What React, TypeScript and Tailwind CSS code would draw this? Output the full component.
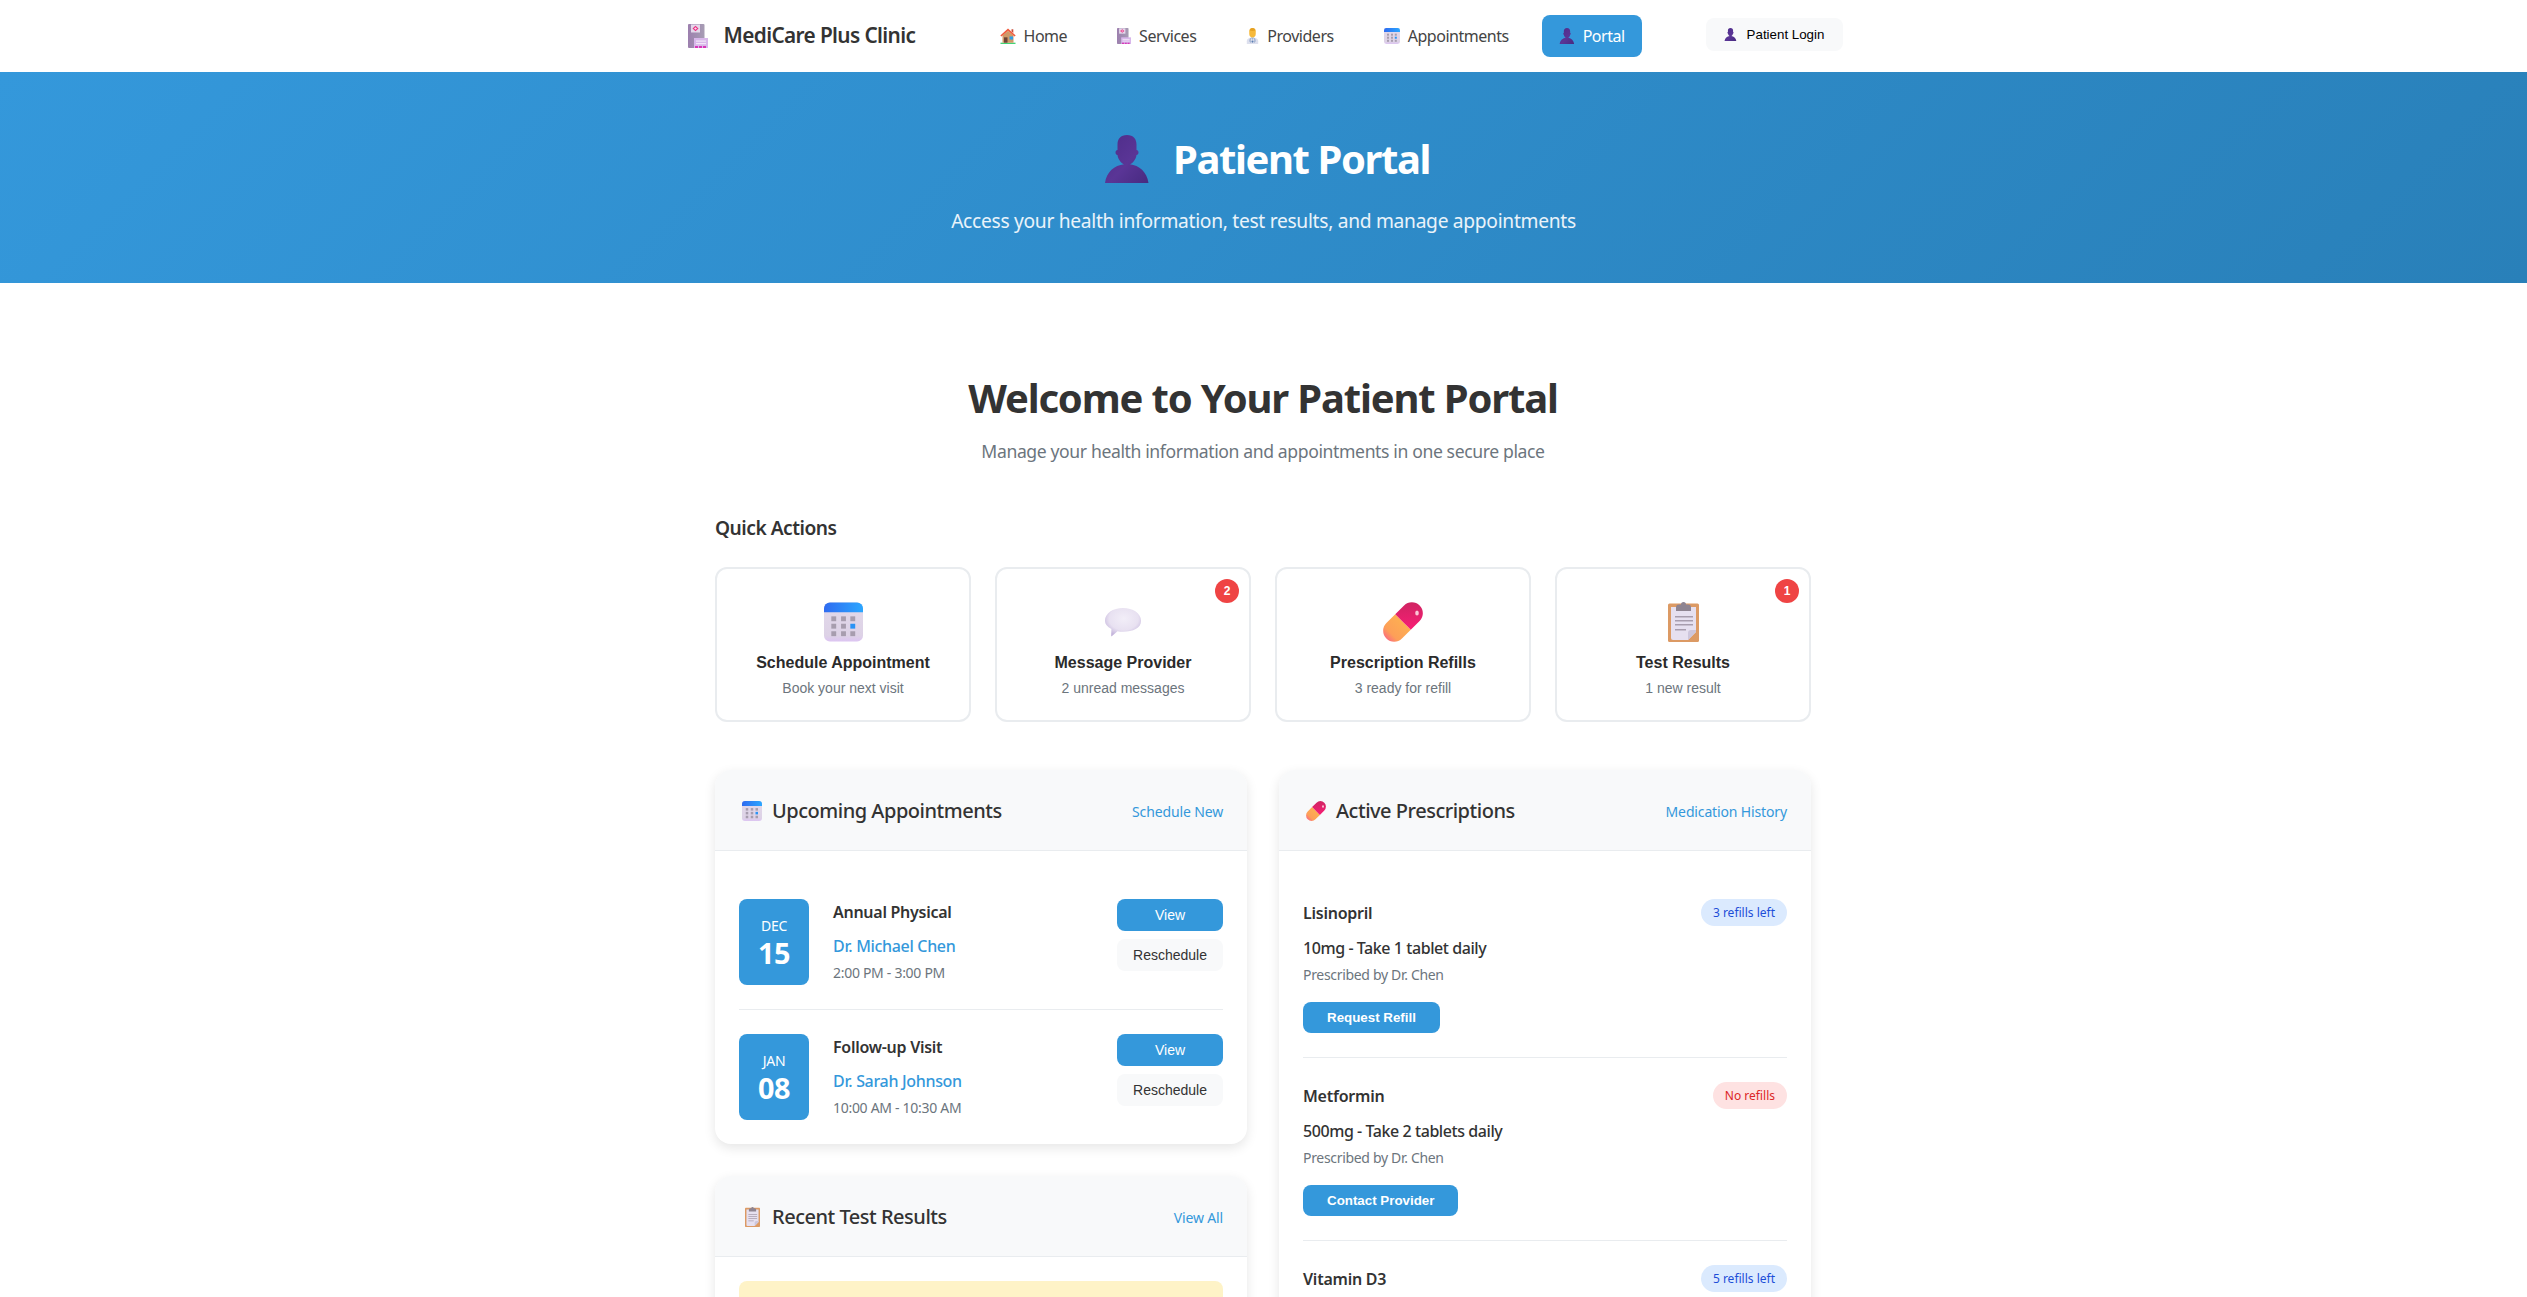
const CalendarIcon = ({ className = 'w-5 h-5' }: { className?: string }) => (
  <svg viewBox="0 0 40 40" className={className}>
    <defs>
      <linearGradient id="calTop" x1="0" y1="0" x2="1" y2="0">
        <stop offset="0" stopColor="#2f6bf0" />
        <stop offset="1" stopColor="#2ba6ff" />
      </linearGradient>
      <linearGradient id="calBody" x1="0" y1="0" x2="0" y2="1">
        <stop offset="0" stopColor="#e2d9ea" />
        <stop offset="0.85" stopColor="#ddd2e6" />
        <stop offset="1" stopColor="#dcc4f2" />
      </linearGradient>
    </defs>
    <rect x="0" y="0" width="40" height="40" rx="6" fill="url(#calBody)" />
    <path d="M0 10V6a6 6 0 0 1 6-6h28a6 6 0 0 1 6 6v4z" fill="url(#calTop)" />
    {[16.7, 24.3, 32].map((y) =>
      [10, 20, 29.5].map((x) => (
        <rect key={`${x}-${y}`} x={x - 2.5} y={y - 2.5} width="5" height="5" fill={x === 29.5 && y === 24.3 ? '#2b93f5' : '#a79dae'} />
      ))
    )}
  </svg>
);

const PillIcon = ({ className = 'w-5 h-5' }: { className?: string }) => (
  <svg viewBox="0 0 40 40" className={className}>
    <defs>
      <linearGradient id="pillA" x1="0" y1="1" x2="1" y2="0">
        <stop offset="0" stopColor="#f81d75" />
        <stop offset="1" stopColor="#c9265f" />
      </linearGradient>
      <linearGradient id="pillB" x1="1" y1="0" x2="0" y2="0">
        <stop offset="0" stopColor="#fdae52" />
        <stop offset="0.7" stopColor="#fd9f58" />
        <stop offset="1" stopColor="#fb6f7c" />
      </linearGradient>
    </defs>
    <g transform="translate(20 20) rotate(-45)">
      <path d="M0 -11H-12.500a11 11 0 0 0 0 22H0z" fill="url(#pillB)" />
      <path d="M0 -11H12.500a11 11 0 0 1 0 22H0z" fill="url(#pillA)" />
    </g>
    <ellipse cx="34" cy="11" rx="1.800" ry="2.600" fill="#fbc6d6" />
  </svg>
);

const ClipboardIcon = ({ className = 'w-5 h-5' }: { className?: string }) => (
  <svg viewBox="0 0 31 40" preserveAspectRatio="none" className={className}>
    <rect x="0" y="1.500" width="31" height="38.500" rx="1.500" fill="#dc9a64" />
    <path d="M3 5h25v25l-8 8H5a2 2 0 0 1-2-2z" fill="#e6e0f0" />
    <path d="M28 28v2l-8 8v-7a3 3 0 0 1 3-3z" fill="#cdc6dc" />
    <path d="M13 2.500a2.500 2.500 0 0 1 5 0h2a3 3 0 0 1 3 3V9H8V5.500a3 3 0 0 1 3-3z" fill="#8e8491" />
    <rect x="7" y="14" width="18" height="1.500" fill="#a79dae" />
    <rect x="7" y="18" width="18" height="1.500" fill="#a79dae" />
    <rect x="7" y="22" width="18" height="1.500" fill="#a79dae" />
    <rect x="7" y="27" width="11" height="1.500" fill="#a79dae" />
  </svg>
);

const BubbleIcon = ({ className = 'w-5 h-5' }: { className?: string }) => (
  <svg viewBox="0 0 40 34" preserveAspectRatio="none" className={className}>
    <defs>
      <radialGradient id="bubble" cx="0.52" cy="0.38" r="0.62">
        <stop offset="0" stopColor="#f2eef8" />
        <stop offset="0.65" stopColor="#e8e1f1" />
        <stop offset="1" stopColor="#c4b5dc" />
      </radialGradient>
    </defs>
    <path d="M20 1c10.500 0 19 6 19 14.500S30.500 28 20 28c-2 0-4-.2-5.800-.6L8.500 33c-.5.500-1 .2-1-.5l.3-7.500C3.500 22.500 1 19.200 1 15.500 1 7 9.500 1 20 1z" fill="url(#bubble)" />
  </svg>
);

const PersonIcon = ({ className = 'w-4 h-4' }: { className?: string }) => (
  <svg viewBox="0 0 44 48" className={className}>
    <defs>
      <linearGradient id="person" x1="0" y1="0" x2="1" y2="1">
        <stop offset="0" stopColor="#4d2c88" />
        <stop offset="0.55" stopColor="#5a3596" />
        <stop offset="1" stopColor="#472a80" />
      </linearGradient>
    </defs>
    <path d="M22 0c6.500 0 9.500 4 9.500 9.500V15c1.200.2 2 1.200 2 2.500s-.8 2.300-2 2.500c-.6 4.600-3.500 8-6.500 9.200 9 1 17 7.500 18.500 18.800H0C1.500 36.700 9.500 30.200 19 29.200 16 28 13.100 24.600 12.500 20c-1.200-.2-2-1.200-2-2.500s.8-2.300 2-2.500V9.500C12.500 4 15.500 0 22 0z" fill="url(#person)" />
  </svg>
);

const HospitalIcon = ({ className = 'w-5 h-5' }: { className?: string }) => (
  <svg viewBox="0 0 20 24" preserveAspectRatio="none" className={className}>
    <defs>
      <linearGradient id="hosp" x1="0" y1="0" x2="1" y2="0">
        <stop offset="0" stopColor="#9c7fae" />
        <stop offset="1" stopColor="#a79db4" />
      </linearGradient>
    </defs>
    <rect x="0" y="0" width="16.500" height="24" rx="1" fill="url(#hosp)" />
    <rect x="3" y="0.500" width="9" height="8" fill="#e4d8ea" />
    <path d="M7.500 1.800 10.500 4.500 7.500 7.200 4.500 4.500z" fill="#ea2e83" />
    <path d="M7.500 3.300 9 4.500 7.500 5.700 6 4.500z" fill="#f7dcec" />
    <rect x="6" y="14" width="14" height="10" fill="#d8b7ea" />
    <rect x="8" y="16.500" width="10" height="1.200" fill="#f2e7f7" />
    <rect x="8" y="19" width="10" height="1.200" fill="#f2e7f7" />
    <rect x="7" y="22" width="3" height="2" fill="#d737b8" />
    <rect x="11" y="22" width="3" height="2" fill="#d737b8" />
    <rect x="15" y="22" width="3" height="2" fill="#d737b8" />
  </svg>
);

const HouseIcon = ({ className = 'w-4 h-4' }: { className?: string }) => (
  <svg viewBox="0 0 16 18" preserveAspectRatio="none" className={className}>
    <rect x="0.500" y="16.500" width="15" height="1.500" fill="#43d477" />
    <path d="M2.500 8.500 8 3l5.500 5.500v8h-11z" fill="#cf9a69" />
    <rect x="4" y="10.500" width="3.500" height="6" fill="#6d4337" />
    <rect x="9.500" y="9.500" width="3.500" height="3.500" fill="#2f9fe6" />
    <path d="M11.500 1.500h1.800v4l-1.800-1.500z" fill="#c94e3a" />
    <path d="M8 .5.300 8.300l1.200 1.200L8 3l6.500 6.500 1.200-1.200z" fill="#f05a3c" />
  </svg>
);

const DoctorIcon = ({ className = 'w-4 h-4' }: { className?: string }) => (
  <svg viewBox="0 0 16 20" preserveAspectRatio="none" className={className}>
    <path d="M1 20v-3.500C1 13.500 4 12 8 12s7 1.500 7 4.500V20z" fill="#dde0ee" />
    <path d="M6 12h4l-2 3z" fill="#9ab3d8" />
    <path d="M5.500 13c-.7 2-.7 3.500 0 5M10.500 13c.7 2 .7 3.500 0 5" stroke="#5b7db0" strokeWidth="0.900" fill="none" />
    <circle cx="8" cy="17" r="1.300" fill="#5b7db0" />
    <path d="M8 0c2.700 0 4 1.700 4 4v3.500C12 10 10.300 12 8 12S4 10 4 7.500V4c0-2.300 1.300-4 4-4z" fill="#f6b93b" />
    <path d="M4.500 3c2 .8 5 .8 7 0 0-1.800-1.400-3-3.500-3S4.500 1.200 4.500 3z" fill="#e5a123" />
  </svg>
);

const NavLink = ({ icon, label, active }: { icon: React.ReactNode; label: string; active?: boolean }) => (
  <a className={`flex h-[42px] items-center gap-2 rounded-lg px-[17px] text-[16px] tracking-[-0.03em] ${active ? 'bg-[#3498db] text-white' : 'text-[#444444]'}`}>
    {icon}
    {label}
  </a>
);

const ActionCard = ({ icon, title, sub, badge }: { icon: React.ReactNode; title: string; sub: string; badge?: string }) => (
  <div className="relative flex h-[155px] flex-col items-center rounded-xl border-2 border-[#e9ecef] pt-[33px] font-['Liberation_Sans',sans-serif]">
    {badge && (
      <span className="absolute right-[10px] top-[10px] flex h-6 w-6 items-center justify-center rounded-full bg-[#ef4444] text-[12px] font-bold text-white">
        {badge}
      </span>
    )}
    <div className="flex h-10 items-center justify-center">{icon}</div>
    <div className="mt-[10px] text-[16px] font-bold leading-[22px] text-[#2b2b2b]">{title}</div>
    <div className="mt-[3px] text-[14px] leading-[22px] text-[#6c757d]">{sub}</div>
  </div>
);

const Panel = ({ icon, title, link, children }: { icon: React.ReactNode; title: string; link: string; children: React.ReactNode }) => (
  <div className="overflow-hidden rounded-2xl bg-white shadow-[0_4px_12px_rgba(0,0,0,0.1)]">
    <div className="flex h-[81px] items-center justify-between border-b border-[#e9ecef] bg-[#f8f9fa] px-6 pt-[2px]">
      <h3 className="flex items-center gap-[10px] pl-[3px] text-[20px] font-medium tracking-[-0.024em] text-[#333333]">
        {icon}
        {title}
      </h3>
      <a className="text-[14px] tracking-[-0.01em] text-[#3498db]">{link}</a>
    </div>
    <div className="p-6">{children}</div>
  </div>
);

const Appointment = ({ mon, day, title, doctor, time, last }: { mon: string; day: string; title: string; doctor: string; time: string; last?: boolean }) => (
  <div className={`flex gap-6 ${last ? 'pt-6' : 'border-b border-[#e9ecef] py-6'}`}>
    <div className="flex h-[86px] w-[70px] flex-col items-center justify-center rounded-lg bg-[#3498db] text-white">
      <span className="text-[14px] leading-[22px] tracking-[-0.02em]">{mon}</span>
      <span className="text-[28.8px] font-bold leading-[32px] tracking-[-0.02em]">{day}</span>
    </div>
    <div className="flex-1">
      <div className="text-[16px] font-semibold leading-[26px] tracking-[-0.017em] text-[#333333]">{title}</div>
      <div className="mt-[8px] text-[16px] font-medium leading-[26px] tracking-[-0.02em] text-[#3498db]">{doctor}</div>
      <div className="mt-[3px] text-[14px] leading-[22px] tracking-[-0.021em] text-[#6c757d]">{time}</div>
    </div>
    <div className="flex w-[106px] flex-col gap-2 font-['Liberation_Sans',sans-serif] text-[14px]">
      <button className="h-8 rounded-lg bg-[#3498db] text-white">View</button>
      <button className="h-8 rounded-lg bg-[#f8f9fa] text-[#333333]">Reschedule</button>
    </div>
  </div>
);

const Prescription = ({ name, dose, badge, action, tone }: { name: string; dose?: string; badge: string; action?: string; tone: 'blue' | 'red' }) => (
  <div className={dose ? 'border-b border-[#e9ecef] py-6' : 'pt-6'}>
    <div className="flex items-center justify-between">
      <span className="text-[16px] font-semibold tracking-[-0.015em] text-[#333333]">{name}</span>
      <span className={`flex h-[27px] items-center rounded-full px-3 text-[12px] ${tone === 'blue' ? 'bg-[#dbeafe] text-[#1d4ed8]' : 'bg-[#fee2e2] text-[#dc2626]'}`}>
        {badge}
      </span>
    </div>
    {dose && (
      <>
        <div className="mt-[9px] text-[16px] font-medium leading-[26px] tracking-[-0.027em] text-[#333333]">{dose}</div>
        <div className="mt-[3px] text-[14px] leading-[22px] tracking-[-0.023em] text-[#6c757d]">Prescribed by Dr. Chen</div>
        <button className="mt-[16px] block h-[31px] rounded-lg bg-[#3498db] px-6 font-['Liberation_Sans',sans-serif] text-[13.33px] font-bold text-white">{action}</button>
      </>
    )}
  </div>
);

const App = () => {
  return (
    <div className="h-screen overflow-hidden bg-white font-['Noto_Sans',sans-serif]">
      <nav className="relative z-10 h-[72px] bg-white">
        <div className="mx-auto flex h-full w-[1200px] items-center pl-6 pr-[21px]">
          <div className="flex w-[295px] items-center gap-4 text-[20.8px] font-semibold tracking-[-0.03em] text-[#333333]">
            <HospitalIcon className="h-6 w-5" />
            MediCare Plus Clinic
          </div>
          <div className="flex gap-4">
            <NavLink icon={<HouseIcon className="h-4 w-4" />} label="Home" />
            <NavLink icon={<HospitalIcon className="h-4 w-[14px]" />} label="Services" />
            <NavLink icon={<DoctorIcon className="h-4 w-[13px]" />} label="Providers" />
            <NavLink icon={<CalendarIcon className="h-4 w-4" />} label="Appointments" />
            <NavLink icon={<PersonIcon className="h-4 w-4" />} label="Portal" active />
          </div>
          <button className="-mt-[3px] ml-auto flex h-[33px] w-[137px] items-center justify-center gap-[10px] rounded-lg bg-[#f8f9fa] font-['Liberation_Sans',sans-serif] text-[13.33px] text-black">
            <PersonIcon className="h-[13px] w-[13px]" />
            Patient Login
          </button>
        </div>
      </nav>

      <header className="flex h-[211px] flex-col items-center bg-[linear-gradient(135deg,#3498db,#2980b9)] pt-[59px] text-white">
        <h1 className="flex items-center gap-[24px] pl-2 text-[40px] font-bold leading-[56px] tracking-[-0.035em]">
          <PersonIcon className="h-12 w-11" />
          Patient Portal
        </h1>
        <p className="mt-[19px] text-[19.2px] leading-[30px] tracking-[-0.015em] text-white/90">Access your health information, test results, and manage appointments</p>
      </header>

      <main className="mx-auto w-[1097px] pr-px pt-[88px]">
        <div className="text-center">
          <h2 className="text-[40px] font-bold leading-[54px] tracking-[-0.029em] text-[#333333]">Welcome to Your Patient Portal</h2>
          <p className="mt-[12px] text-[17.6px] leading-[28px] tracking-[-0.022em] text-[#6c757d]">Manage your health information and appointments in one secure place</p>
        </div>

        <h3 className="mt-[48px] text-[19.2px] font-semibold leading-[30px] tracking-[-0.026em] text-[#333333]">Quick Actions</h3>
        <div className="mt-[24px] grid grid-cols-4 gap-6">
          <ActionCard icon={<CalendarIcon className="h-10 w-[39px]" />} title="Schedule Appointment" sub="Book your next visit" />
          <ActionCard icon={<BubbleIcon className="h-[30px] w-[38px]" />} title="Message Provider" sub="2 unread messages" badge="2" />
          <ActionCard icon={<PillIcon className="h-10 w-10" />} title="Prescription Refills" sub="3 ready for refill" />
          <ActionCard icon={<ClipboardIcon className="h-10 w-[31px]" />} title="Test Results" sub="1 new result" badge="1" />
        </div>

        <div className="mt-[48px] grid grid-cols-2 gap-8">
          <div className="flex flex-col gap-8">
            <Panel icon={<CalendarIcon className="h-5 w-5" />} title="Upcoming Appointments" link="Schedule New">
              <Appointment mon="DEC" day="15" title="Annual Physical" doctor="Dr. Michael Chen" time="2:00 PM - 3:00 PM" />
              <Appointment mon="JAN" day="08" title="Follow-up Visit" doctor="Dr. Sarah Johnson" time="10:00 AM - 10:30 AM" last />
            </Panel>
            <Panel icon={<ClipboardIcon className="ml-[3px] mr-[2px] h-5 w-[15px]" />} title="Recent Test Results" link="View All">
              <div className="h-[90px] rounded-lg bg-[#fef3c7]" />
            </Panel>
          </div>
          <Panel icon={<PillIcon className="h-5 w-5" />} title="Active Prescriptions" link="Medication History">
            <Prescription name="Lisinopril" dose="10mg - Take 1 tablet daily" badge="3 refills left" action="Request Refill" tone="blue" />
            <Prescription name="Metformin" dose="500mg - Take 2 tablets daily" badge="No refills" action="Contact Provider" tone="red" />
            <Prescription name="Vitamin D3" badge="5 refills left" tone="blue" />
          </Panel>
        </div>
      </main>
    </div>
  );
};

export default App;
